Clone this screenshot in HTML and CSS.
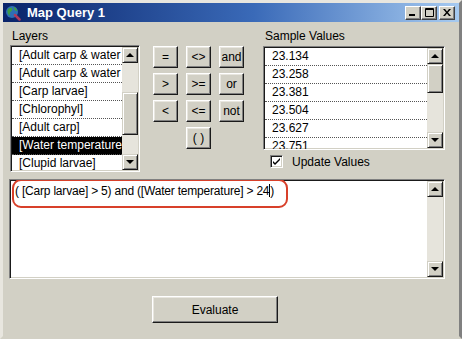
FILE: index.html
```html
<!DOCTYPE html>
<html lang="en">
<head>
    <meta charset="UTF-8">
    <title>Map Query 1</title>
    <link rel="stylesheet" href="styles.css">
</head>
<body>

<div class="window">
    <!-- Title bar -->
    <div class="titlebar">
        <svg class="app-icon" width="16" height="16" viewBox="0 0 16 16">
            <circle cx="7" cy="7" r="6" fill="#2f6fb5"/>
            <path d="M2.5 5 Q4 2 7 3 Q8 5 6 6.5 Q4 8 5 11 Q2 9 2.5 5Z" fill="#3f9d45"/>
            <path d="M8.5 1.5 Q11.5 2.5 12.5 6 Q10.5 6.5 9.5 4.5Z" fill="#3f9d45"/>
            <line x1="10" y1="10" x2="14.5" y2="14.5" stroke="#b03a5c" stroke-width="2.5" stroke-linecap="round"/>
        </svg>
        <span class="title">Map Query 1</span>
        <div class="title-buttons">
            <span class="tbtn"><svg width="8" height="7" viewBox="0 0 8 7"><rect x="0" y="5" width="6" height="2" fill="#000"/></svg></span>
            <span class="tbtn"><svg width="9" height="9" viewBox="0 0 9 9"><path d="M0.5 0.5h8v8h-8z M0.5 1.5h8" fill="none" stroke="#000"/></svg></span>
            <span class="tbtn close"><svg width="8" height="7" viewBox="0 0 8 7"><path d="M0 0h2l2 2.5 2-2.5h2l-3 3.5 3 3.5h-2l-2-2.5-2 2.5h-2l3-3.5z" fill="#000"/></svg></span>
        </div>
    </div>

    <div class="content">
        <div class="top">
            <!-- Layers list -->
            <div class="layers">
                <div class="label">Layers</div>
                <div class="listbox layers-list">
                    <ul class="items">
                        <li>[Adult carp &amp; water</li>
                        <li>[Adult carp &amp; water</li>
                        <li>[Carp larvae]</li>
                        <li>[Chlorophyl]</li>
                        <li>[Adult carp]</li>
                        <li class="selected">[Water temperature</li>
                        <li>[Clupid larvae]</li>
                    </ul>
                    <div class="vscroll">
                        <span class="sbtn up"></span>
                        <span class="track layers-track"></span>
                        <span class="thumb layers-thumb"></span>
                        <span class="track rest"></span>
                        <span class="sbtn down"></span>
                    </div>
                </div>
            </div>

            <!-- Operators -->
            <div class="ops">
                <button class="btn">=</button>
                <button class="btn">&lt;&gt;</button>
                <button class="btn">and</button>
                <button class="btn">&gt;</button>
                <button class="btn">&gt;=</button>
                <button class="btn">or</button>
                <button class="btn">&lt;</button>
                <button class="btn">&lt;=</button>
                <button class="btn">not</button>
                <button class="btn paren">( )</button>
            </div>

            <!-- Sample values -->
            <div class="samples">
                <div class="label">Sample Values</div>
                <div class="listbox samples-list">
                    <ul class="items">
                        <li>23.134</li>
                        <li>23.258</li>
                        <li>23.381</li>
                        <li>23.504</li>
                        <li>23.627</li>
                        <li>23.751</li>
                    </ul>
                    <div class="vscroll">
                        <span class="sbtn up"></span>
                        <span class="thumb samples-thumb"></span>
                        <span class="track rest"></span>
                        <span class="sbtn down"></span>
                    </div>
                </div>
                <label class="check-row">
                    <span class="checkbox">
                        <svg width="9" height="9" viewBox="0 0 9 9"><path d="M1 4l2 2 5-5v2l-5 5-2-2z" fill="#000"/></svg>
                    </span>
                    Update Values
                </label>
            </div>
        </div>

        <!-- Expression -->
        <div class="listbox expr">
            <div class="expr-text">( [Carp larvae] &gt; 5) and ([Water temperature] &gt; 24<span class="caret"></span>)</div>
            <div class="highlight"></div>
            <div class="vscroll">
                <span class="sbtn up"></span>
                <span class="track rest"></span>
                <span class="sbtn down"></span>
            </div>
        </div>

        <div class="actions">
            <button class="btn evaluate">Evaluate</button>
        </div>
    </div>
</div>

</body>
</html>
```

FILE: styles.css
```css
/* base */
* {
    box-sizing: border-box;
}
body {
    margin: 0;
    font-family: "Liberation Sans", Arial, sans-serif;
    font-size: 12px;
    color: #000;
    background: #d2d0c5;
}
ul {
    margin: 0;
    padding: 0;
    list-style: none;
}

/* window frame */
.window {
    width: 462px;
    height: 339px;
    background: #d2d0c5;
    border: 3px solid #d2d0c5;
    border-left-color: #e8e6df;
    border-top-color: #e8e6df;
    border-right-color: #808080;
    overflow: hidden;
}

/* title bar */
.titlebar {
    height: 19px;
    display: flex;
    align-items: center;
    padding: 0 2px;
    background: linear-gradient(to right, #0a246a 0%, #3a6ab8 55%, #a6caf0 100%);
}
.app-icon {
    margin-right: 6px;
}
.title {
    color: #fff;
    font-weight: bold;
    font-size: 13px;
}
.title-buttons {
    margin-left: auto;
    margin-right: 2px;
    display: flex;
}
.tbtn {
    width: 16px;
    height: 14px;
    display: flex;
    align-items: center;
    justify-content: center;
    background: #d2d0c5;
    border: 1px solid;
    border-color: #fff #404040 #404040 #fff;
    box-shadow: inset -1px -1px #808080;
}
.tbtn.close {
    margin-left: 2px;
}

/* content */
.content {
    padding: 7px 0 0 7px;
}
.top {
    display: flex;
    height: 143px;
}
.label {
    height: 16px;
    padding-left: 2px;
    line-height: 15px;
}

/* sunken list boxes */
.listbox {
    position: relative;
    display: flex;
    background: #fff;
    border: 1px solid;
    border-color: #808080 #fff #fff #808080;
    box-shadow: inset 1px 1px #1a1a1a, inset -1px -1px #d2d0c5;
    padding: 1px;
    overflow: hidden;
}
.items {
    flex: 1;
    min-width: 0;
}
.items li {
    height: 18px;
    line-height: 17px;
    padding-left: 7px;
    white-space: nowrap;
    overflow: hidden;
    border-bottom: 1px dotted #555;
}
.items li.selected {
    background: #000;
    color: #fff;
}

.layers {
    width: 130px;
}
.layers-list {
    height: 127px;
}

/* scroll bars */
.vscroll {
    width: 16px;
    flex: none;
    display: flex;
    flex-direction: column;
    background: #e6e4dc;
}
.sbtn,
.thumb {
    display: block;
    background: #d2d0c5;
    border: 1px solid;
    border-color: #d2d0c5 #1a1a1a #1a1a1a #d2d0c5;
    box-shadow: inset 1px 1px #fff, inset -1px -1px #808080;
}
.sbtn {
    height: 16px;
    position: relative;
}
.sbtn::after {
    content: "";
    position: absolute;
    left: 3px;
    border-left: 4px solid transparent;
    border-right: 4px solid transparent;
}
.sbtn.up::after {
    top: 5px;
    border-bottom: 4px solid #000;
}
.sbtn.down::after {
    top: 5px;
    border-top: 4px solid #000;
}
.track {
    display: block;
}
.track.rest {
    flex: 1;
}
.layers-track {
    height: 29px;
}
.layers-thumb {
    height: 43px;
}
.samples-thumb {
    height: 29px;
}

/* operator buttons */
.ops {
    margin: 17px 0 0 13px;
    display: grid;
    grid-template-columns: repeat(3, 25px);
    grid-auto-rows: 22px;
    column-gap: 8px;
    row-gap: 5px;
    align-content: start;
}
.btn {
    font-family: "Liberation Sans", Arial, sans-serif;
    font-size: 12px;
    color: #000;
    padding: 0;
    background: #d2d0c5;
    border: 1px solid;
    border-color: #fff #1a1a1a #1a1a1a #fff;
    box-shadow: inset -1px -1px #808080, inset 1px 1px #e8e6df;
}
.paren {
    grid-column: 2;
}

/* sample values */
.samples {
    margin-left: 19px;
    width: 182px;
}
.samples .label {
    height: 17px;
}
.samples-list {
    height: 104px;
}
.check-row {
    display: flex;
    align-items: center;
    margin: 5px 0 0 7px;
    height: 13px;
}
.checkbox {
    width: 13px;
    height: 13px;
    margin-right: 9px;
    display: flex;
    align-items: center;
    justify-content: center;
    background: #fff;
    border: 1px solid;
    border-color: #808080 #fff #fff #808080;
    box-shadow: inset 1px 1px #1a1a1a, inset -1px -1px #d2d0c5;
}

/* expression box */
.expr {
    margin: 7px 0 0 -1px;
    width: 436px;
    height: 100px;
}
.expr-text {
    flex: 1;
    padding: 3px 0 0 4px;
    white-space: nowrap;
    letter-spacing: -0.2px;
}
.caret {
    display: inline-block;
    width: 1px;
    height: 13px;
    background: #000;
    vertical-align: -2px;
}
.highlight {
    position: absolute;
    left: 2px;
    top: -1px;
    width: 276px;
    height: 29px;
    border: 2px solid #d8402a;
    border-radius: 9px;
}

/* evaluate */
.actions {
    padding: 17px 0 0 142px;
}
.evaluate {
    width: 126px;
    height: 27px;
}
```
